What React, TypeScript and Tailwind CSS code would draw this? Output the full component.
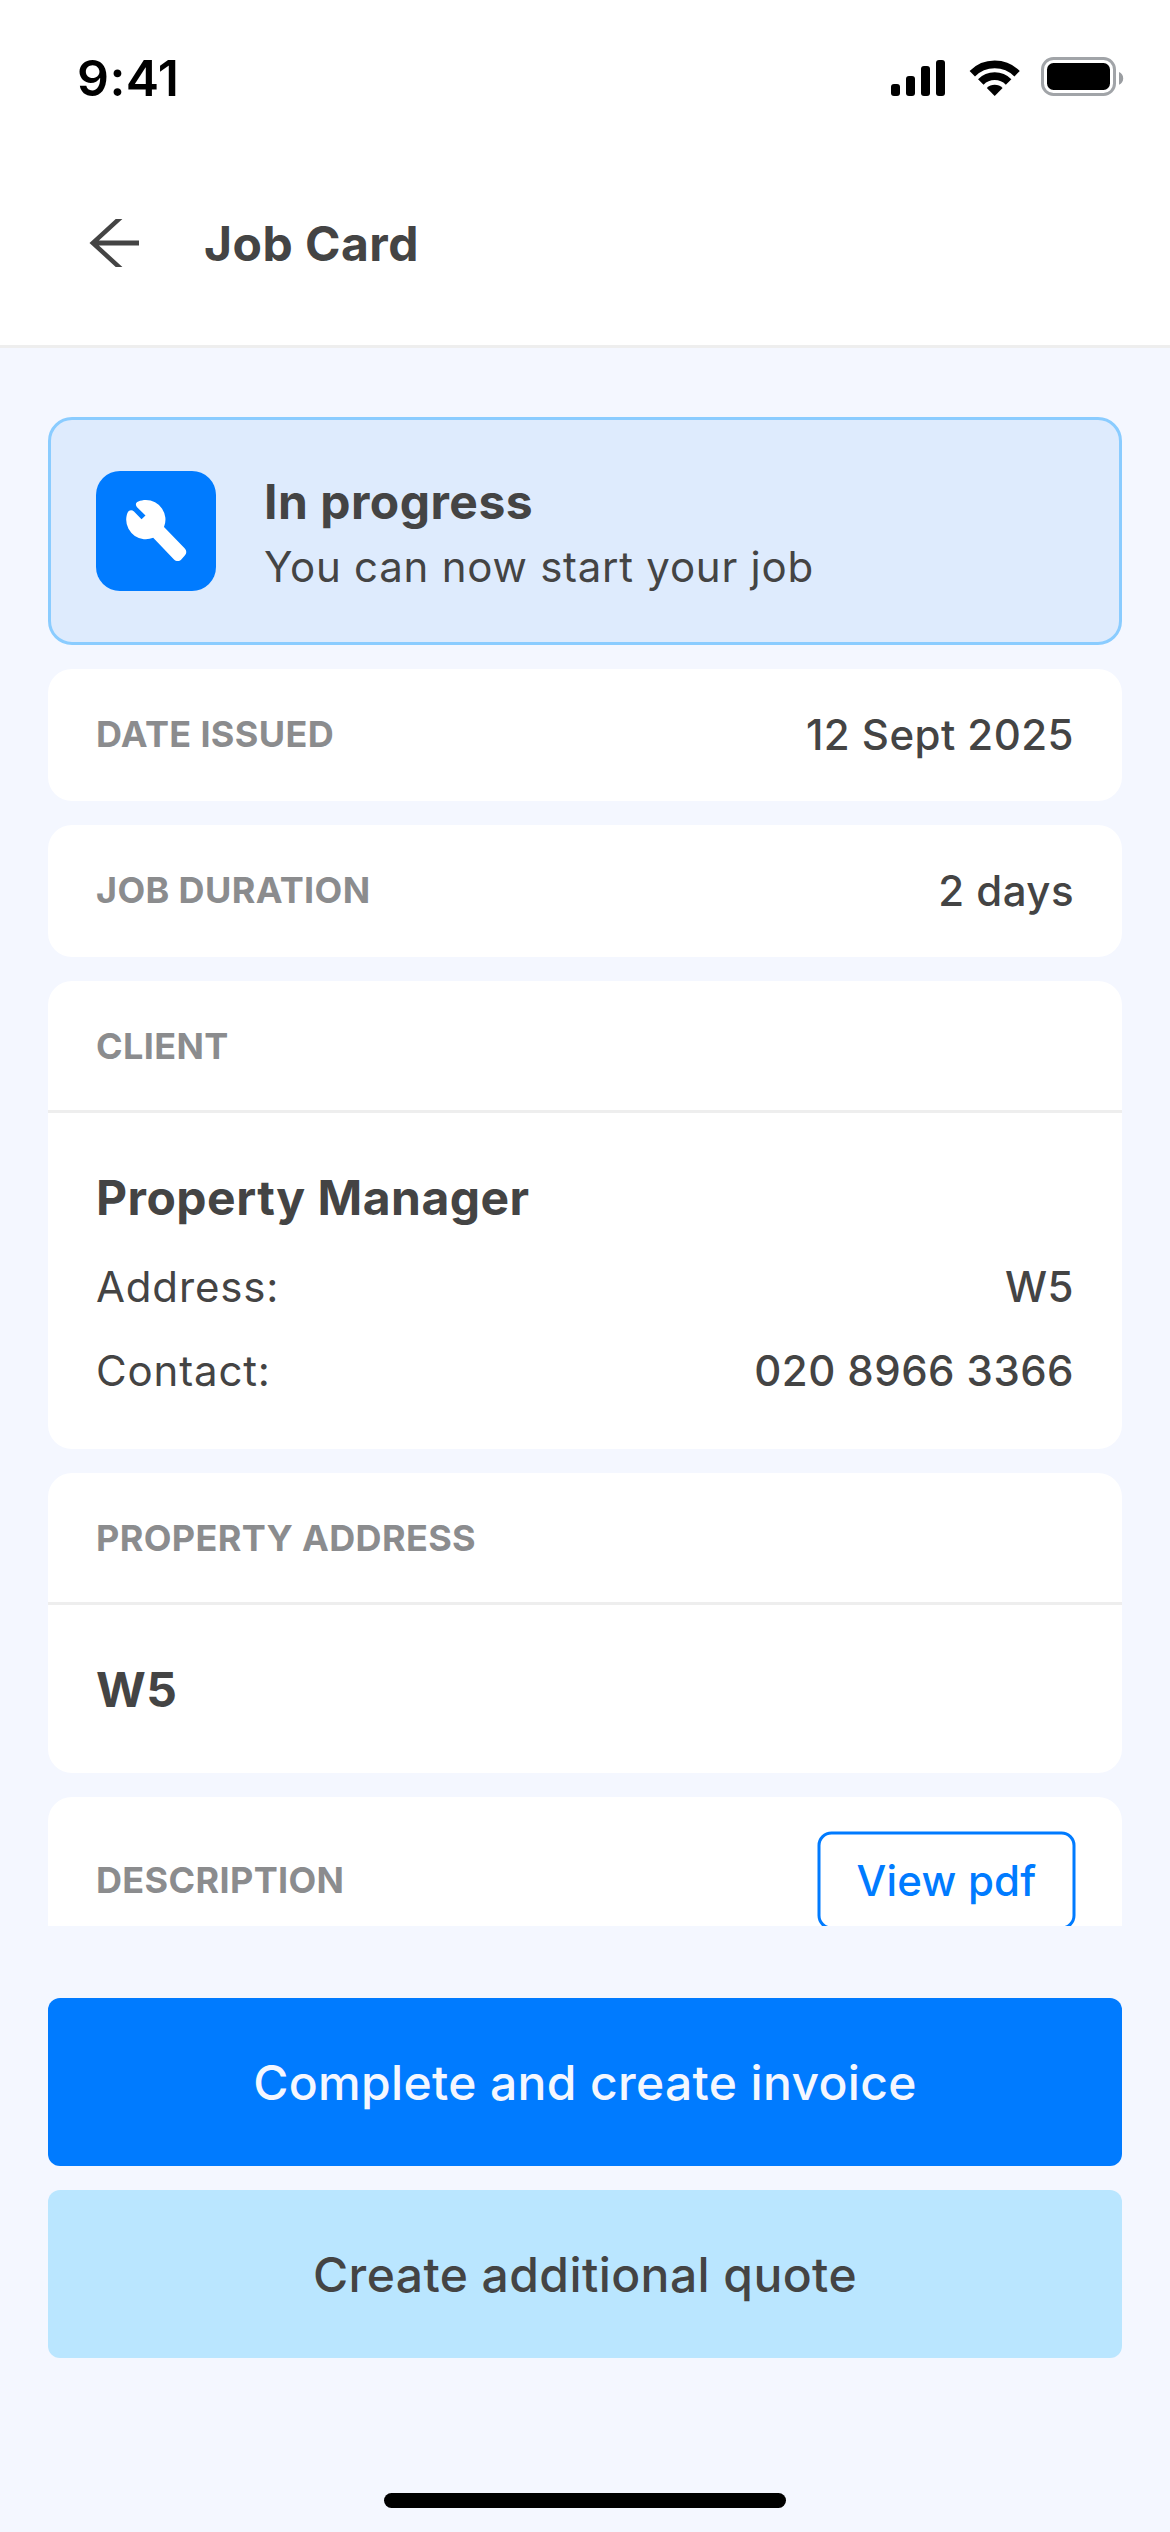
import React from "react";

function StatusIcons() {
  return (
    <svg width="234" height="42" viewBox="891 57 234 42" fill="#000" aria-hidden="true">
      <rect x="891" y="84" width="9" height="12" rx="3" />
      <rect x="906" y="76" width="9" height="20" rx="3" />
      <rect x="921" y="66" width="9" height="30" rx="3" />
      <rect x="936" y="60" width="9" height="36" rx="3" />
      <g fill="none" stroke="#000">
        <path d="M972.3 73.7A31.6 31.6 0 0 1 1017.1 73.7" strokeWidth="7.6" />
        <path d="M980.8 82A19.6 19.6 0 0 1 1008.6 82" strokeWidth="7.8" />
      </g>
      <path d="M994.7 96L986.8 88.1A11.2 11.2 0 0 1 1002.6 88.1Z" />
      <rect x="1042.5" y="58.5" width="72" height="36" rx="11" fill="none" stroke="#a1a4a8" strokeWidth="3" />
      <rect x="1047" y="63" width="63" height="27" rx="6.5" />
      <path d="M1119 72C1121.6 73.1 1123.2 75.6 1123.2 78.4C1123.2 81.2 1121.6 83.7 1119 84.8Z" fill="#9a9da1" />
    </svg>
  );
}

function BackArrow() {
  return (
    <svg width="60" height="60" viewBox="84 213 60 60" fill="#444444" aria-hidden="true">
      <path d="M89.5 243L115.7 219H122.4L98.9 240.5H139V245.5H98.9L122.4 267H115.7Z" />
    </svg>
  );
}

function Wrench() {
  return (
    <svg width="120" height="120" viewBox="0 0 120 120" fill="#fff" aria-hidden="true">
      <path d="M49.8 29A19.6 19.6 0 0 1 68 56L88.6 77.3C90.8 79.6 90.8 82.6 88.6 84.8L85.3 88.4C83.2 90.6 80.2 90.6 78 88.4L57.2 66.8A19.6 19.6 0 0 1 30.2 48.6C30.2 46 30.7 43.4 31.7 41.4C33 38.9 36 38.6 38 40.6L45.5 48.3L49.5 44.5L41.3 36.5C39.1 34.3 39.5 31.6 42.3 30.5C44.6 29.5 47.3 29 49.8 29Z" />
    </svg>
  );
}

function Label({ children }: { children: React.ReactNode }) {
  return (
    <span className="text-[36px] leading-[48px] font-bold tracking-[0.36px] text-[#8b8c8e]">
      {children}
    </span>
  );
}

function Value({ children }: { children: React.ReactNode }) {
  return <span className="text-[42px] leading-[60px] font-medium tracking-[0.45px]">{children}</span>;
}

function InfoRow({ label, value }: { label: string; value: string }) {
  return (
    <section className="flex h-[132px] shrink-0 items-center justify-between rounded-3xl bg-white px-12">
      <div className="flex pb-[2px]">
        <Label>{label}</Label>
      </div>
      <Value>{value}</Value>
    </section>
  );
}

function Section({ title, children }: { title: string; children: React.ReactNode }) {
  return (
    <section className="shrink-0 rounded-3xl bg-white">
      <div className="flex h-[132px] items-center border-b-[3px] border-[#eeeeee] px-12">
        <Label>{title}</Label>
      </div>
      <div className="flex flex-col gap-6 p-12">{children}</div>
    </section>
  );
}

function Heading({ children }: { children: React.ReactNode }) {
  return (
    <h2 className="h-[72px] pt-px text-[48px] leading-[72px] font-bold tracking-[0.48px]">{children}</h2>
  );
}

function Detail({ label, value }: { label: string; value: string }) {
  return (
    <div className="flex items-center justify-between">
      <span className="text-[42px] leading-[60px] tracking-[0.84px]">{label}</span>
      <Value>{value}</Value>
    </div>
  );
}

export default function App() {
  return (
    <div className="flex h-[2532px] w-[1170px] flex-col overflow-hidden bg-[#f4f7ff] font-[Inter,sans-serif] text-[#444444]">
      <header className="border-b-[3px] border-[#eeeeee] bg-white">
        <div className="flex h-[156px] items-center justify-between pr-[45px] pl-[77px]">
          <span className="text-[50px] leading-[60px] font-semibold tracking-[0.4px] text-black">9:41</span>
          <StatusIcons />
        </div>
        <div className="mb-[15px] flex h-[174px] items-center gap-[60px] pl-[84px]">
          <BackArrow />
          <Heading>Job Card</Heading>
        </div>
      </header>

      <main className="flex h-[1578px] shrink-0 flex-col gap-6 overflow-hidden px-12 pt-[69px]">
        <section className="flex h-[228px] shrink-0 items-center gap-12 rounded-3xl border-[3px] border-[#8accff] bg-[#deebfd] pl-[45px]">
          <div className="size-[120px] rounded-3xl bg-[#007bff]">
            <Wrench />
          </div>
          <div className="flex flex-col">
            <Heading>In progress</Heading>
            <p className="text-[42px] leading-[60px] tracking-[0.75px]">You can now start your job</p>
          </div>
        </section>

        <InfoRow label="DATE ISSUED" value="12 Sept 2025" />
        <InfoRow label="JOB DURATION" value="2 days" />

        <Section title="CLIENT">
          <Heading>Property Manager</Heading>
          <Detail label="Address:" value="W5" />
          <Detail label="Contact:" value="020 8966 3366" />
        </Section>

        <Section title="PROPERTY ADDRESS">
          <Heading>W5</Heading>
        </Section>

        <section className="flex h-[300px] shrink-0 items-start justify-between rounded-3xl bg-white pt-[34px] pr-[46px] pl-12">
          <div className="flex h-[98px] items-center">
            <Label>DESCRIPTION</Label>
          </div>
          <button className="flex h-[98px] w-[258px] translate-x-[-0.5px] translate-y-[0.5px] items-center justify-center rounded-[14px] border-[3px] border-[#007bff] text-[42px] leading-[60px] font-medium tracking-[0.2px] text-[#007bff]">
            View pdf
          </button>
        </section>
      </main>

      <footer className="flex flex-col px-12 pt-[72px]">
        <div className="flex flex-col gap-6">
          <button className="h-[168px] rounded-xl bg-[#007bff] pt-[2px] text-[48px] leading-[72px] font-medium tracking-[0.35px] text-[#f4f7ff]">
            Complete and create invoice
          </button>
          <button className="h-[168px] rounded-xl bg-[#bae6ff] pt-[2px] text-[48px] leading-[72px] font-medium tracking-[0.42px]">
            Create additional quote
          </button>
        </div>
        <div className="mt-[135px] h-[15px] w-[402px] self-center rounded-full bg-black" />
      </footer>
    </div>
  );
}
